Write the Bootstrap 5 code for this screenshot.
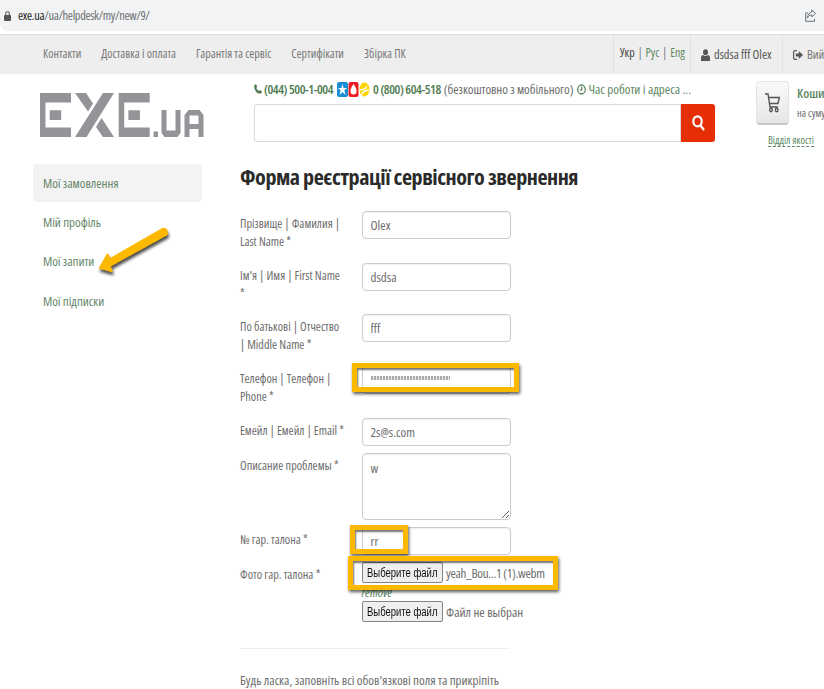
<!DOCTYPE html>
<html lang="uk">
<head>
<meta charset="utf-8">
<title>EXE.ua</title>
<link href="https://cdn.jsdelivr.net/npm/bootstrap@5.3.0/dist/css/bootstrap.min.css" rel="stylesheet">
<style>
body{font-family:"Open Sans",sans-serif;font-stretch:75%;font-size:13px;line-height:18px;color:#6c6c6c;background:#fff;width:824px;height:689px;overflow:hidden;position:relative}
a{color:#5d8862;text-decoration:none}
svg{flex:none;display:block}
.urlbar{height:31px;background:#f1f3f4;border-bottom-left-radius:8px;padding:0 8px 0 4px;font-size:12.3px;letter-spacing:-.3px;color:#6b6e71}
.urlbar b{font-weight:400;color:#222}
.urlbar .addr{margin-left:7px}
.topnav{margin-top:3px;height:40px;background:#eee;border-top:1px solid #dedede;font-size:12px;color:#777}
.topnav .links{padding-left:43px;padding-bottom:2px;gap:20px;width:613px;flex:none}
.topnav .cell{border-left:1px solid #e2e2e2;height:39px;white-space:nowrap;flex:none}
.lang{width:77px;padding-left:6px;padding-bottom:4px;gap:3px}
.lang .cur{color:#444}
.who{width:92px;padding-left:10px;gap:4px;font-size:12.4px;color:#555}
.exit{padding-left:10px;gap:4px;font-size:12.4px}
.main-area{height:615px}
.side{width:240px}
.content{width:475px}
.logo{margin:19px 0 0 40px}
.menu{margin:26px 0 0 33px;width:169px}
.menu a{display:flex;align-items:center;height:39.5px;padding-left:10px;color:#67876b;letter-spacing:-.05px}
.menu a.on{background:#f3f3f3;border-radius:4px;height:38px}
.info{height:30px;padding-left:14px;font-size:13px;white-space:nowrap}
.info strong{font-weight:600;color:#4f7a50;letter-spacing:-.45px}
.info .free{margin-left:3px;letter-spacing:-.08px}
.info .tel{margin-left:2px}
.info .free-tel{margin-left:3px}
.search{margin-left:14px;width:461px;height:38px}
.search .form-control{border:1px solid #d9d9d9;border-radius:3px 0 0 3px;height:38px}
.search .btn{width:34px;height:38px;background:#e62e04;border:0;border-radius:0 3px 3px 0;flex:none}
.cart{padding-left:41px;padding-top:7px;overflow:hidden}
.cartbtn{width:33px;height:44px;border:1px solid #e4e4e4;border-bottom:2px solid #c6c6c6;border-radius:4px;background:linear-gradient(#fafafa,#e6e6e6)}
.carttext{margin-left:8px;padding-top:3px}
.carttext span{font-size:10.5px;padding-top:2px}
.quality{font-size:10.3px;line-height:12px;border-bottom:1px dashed #5d8862;margin:9px 0 0 12px;display:inline-block}
h1{font-size:22.1px;font-weight:700;line-height:30px;letter-spacing:-.47px;color:#2b2b2b;margin:19px 0 20px;white-space:nowrap}
.frow{width:290px}
.frow label{width:107px;margin-right:14.500px;padding-top:4px;font-size:12.2px;flex:none}
.frow .form-control{width:149px;height:28px;border:1px solid #ccc;border-radius:4px;padding:2px 8px;font-size:13px;line-height:18px;color:#6c6c6c;box-shadow:inset 0 1px 1px rgba(0,0,0,.06);font-stretch:75%;flex:none}
.frow textarea.form-control{height:67px;padding-top:5px}
.h52{height:51.7px}.h35{height:35.2px}.h74{height:74px}
.file{height:21px;gap:3px;white-space:nowrap}
.file .fname{letter-spacing:-.3px}
.pick{width:81px;height:21px;background:#efefef;border:1px solid #858585;border-radius:2px;color:#111;font:13px/19px "Liberation Sans",sans-serif;padding:0;margin-left:.5px}
.pick span{display:inline-block;transform:scaleX(.73);margin:0 -20px}
.rule{width:270px;border-top:1px solid #eee;margin-top:26px}
.closing{margin-top:22px}
.stars{width:79px;height:4px;background:repeating-linear-gradient(90deg,#aaa 0 2px,#eee 2px 3px);left:371px;top:376px}
.note{border:5px solid #fdb900;box-shadow:1px 2px 3px rgba(0,0,0,.65),inset 1px 2px 2px rgba(0,0,0,.55)}
.n1{left:352px;top:363px;width:167px;height:29px}
.n2{left:350px;top:525px;width:58px;height:29px}
.n3{left:348px;top:556px;width:210px;height:34px}
.arrow{left:94px;top:222px}
</style>
<script src="https://cdn.jsdelivr.net/npm/bootstrap@5.3.0/dist/js/bootstrap.bundle.min.js"></script>
</head>
<body>
<div class="urlbar d-flex align-items-center">
  <svg width="7" height="10" viewBox="0 0 7 10"><rect y="4" width="7" height="6" rx="1" fill="#555"/><path d="M1.7 4.5V2.6a1.8 1.8 0 013.6 0v1.9" fill="none" stroke="#555" stroke-width="1.1"/></svg>
  <span class="addr"><b>exe.ua</b>/ua/helpdesk/my/new/9/</span>
  <svg class="ms-auto" width="11" height="13" viewBox="0 0 11 13" fill="none" stroke="#6b6e71" stroke-width="1"><path d="M3 4H.7v8.3h8.8V10M6.8 1l3.7 3.4-3.7 3.4V5.9C4.8 5.8 3.3 6.8 2.5 9 2.7 5.5 4.3 3.3 6.800 2.900z"/></svg>
</div>
<nav class="topnav d-flex align-items-center">
  <div class="links d-flex"><span>Контакти</span><span>Доставка і оплата</span><span>Гарантія та сервіс</span><span>Сертифікати</span><span>Збірка ПК</span></div>
  <div class="cell lang d-flex align-items-center"><span class="cur">Укр</span>|<a href="#">Рус</a>|<a href="#">Eng</a></div>
  <div class="cell who d-flex align-items-center"><svg width="9" height="12" viewBox="0 0 9 12" fill="#555"><ellipse cx="4.5" cy="3.2" rx="2.5" ry="3"/><path d="M0 12V9c0-2 1-3 2-3 1.500 1.300 3.500 1.300 5 0 1 0 2 1 2 3v3z"/></svg>dsdsa fff Olex</div>
  <div class="cell exit d-flex align-items-center"><svg width="10" height="10" viewBox="0 0 10 10"><path d="M4 .7H2C1 .7.6 1.2.6 2v6c0 .8.4 1.3 1.400 1.300h2" fill="none" stroke="#555" stroke-width="1.2"/><path d="M2.800 3.500h3V1L10 5 5.800 9V6.500h-3z" fill="#555"/></svg>Вий</div>
</nav>
<div class="main-area d-flex">
  <aside class="side flex-shrink-0">
    <svg class="logo" width="164" height="45" viewBox="0 0 164 45" fill="#929497">
      <path d="M0 0h31v9.500H5.500v25H31V44H0zM9.700 17.300h11.500v9.800H9.700z"/>
      <path d="M63 0h11L46.500 44H35zM35 0h11l7 10.500-5 8zM61.500 25L74 44H63l-7-10z"/>
      <path transform="translate(78.700)" d="M0 0h31v9.500H5.500v25H31V44H0zM9.700 17.300h11.500v9.800H9.700z"/>
      <path d="M113.500 38.500h4.500V44h-4.500zM121.500 17h5v20.500h9V17h5V40l-3 4h-13l-3-4zM144.500 44V22l4-5h11l4 5v22h-5v-8h-9v8zM149.500 31h9v-8.500h-9z"/>
    </svg>
    <div class="menu"><a class="on" href="#">Мої замовлення</a><a href="#">Мій профіль</a><a href="#">Мої запити</a><a href="#">Мої підписки</a></div>
  </aside>
  <main class="content flex-shrink-0">
    <div class="info d-flex align-items-center">
      <svg width="8" height="10" viewBox="0 0 8 10"><path d="M.4.9L2 .3l1.200 2.500L2.300 4c.5 1.300 1.400 2.300 2.600 3l1-1L8 7.500 7.300 9.300C3.800 10.900-.6 6 .4.900z" fill="#4f7a50"/></svg>
      <strong class="tel">(044) 500-1-004</strong>
      <svg class="ms-1" width="33" height="15" viewBox="0 0 33 15"><rect width="11" height="15" rx="2" fill="#1b8fd6"/><path d="M5.500 2l1 4H10L7.300 8.200 8.500 13 5.500 10l-3 3 1.200-4.800L1 6h3.500z" fill="#fff"/><rect x="11.500" width="10" height="15" rx="2" fill="#ed1c24"/><path d="M16.500 2c2 3 3 4.500 3 7a3 3.500 0 01-6 0c0-2.500 1-4 3-7z" fill="#fff"/><ellipse cx="27.500" cy="7.500" rx="5" ry="7" fill="#ffd500"/><path d="M22.500 8c3 0 7.500-1.500 7-4M25 13c0-3 2-4.500 7-5" fill="none" stroke="#fff" stroke-width="1.300"/></svg>
      <strong class="free-tel">0 (800) 604-518</strong><span class="free">(безкоштовно з мобільного)</span>
      <svg class="ms-1" width="9" height="11" viewBox="0 0 9 11" fill="none" stroke="#5d8862" stroke-width="1.300"><ellipse cx="4.500" cy="5.500" rx="3.800" ry="4.500"/><path d="M4.700 2.800v3H2.800"/></svg>
      <a href="#" class="tel">Час роботи і адреса ...</a>
    </div>
    <div class="search d-flex"><input class="form-control" aria-label="Пошук"><button class="btn p-0 d-flex align-items-center justify-content-center" aria-label="Знайти"><svg width="13" height="16" viewBox="0 0 13 16" fill="none" stroke="#fff" stroke-width="2.200"><ellipse cx="5.500" cy="6.300" rx="4.200" ry="5"/><path d="M8.300 10.300L12 15"/></svg></button></div>
    <h1>Форма реєстрації сервісного звернення</h1>
    <form>
      <div class="frow h52 d-flex align-items-start"><label>Прізвище | Фамилия |<br>Last Name *</label><input class="form-control" value="Olex"></div>
      <div class="frow h52 d-flex align-items-start"><label>Ім'я | Имя | First Name<br>*</label><input class="form-control" value="dsdsa"></div>
      <div class="frow h52 d-flex align-items-start"><label>По батькові | Отчество<br>| Middle Name *</label><input class="form-control" value="fff"></div>
      <div class="frow h52 d-flex align-items-start"><label>Телефон | Телефон |<br>Phone *</label><input class="form-control" aria-label="Телефон"></div>
      <div class="frow h35 d-flex align-items-start"><label>Емейл | Емейл | Email *</label><input class="form-control" value="2s@s.com"></div>
      <div class="frow h74 d-flex align-items-start"><label>Описание проблемы *</label><textarea class="form-control">w</textarea></div>
      <div class="frow h35 d-flex align-items-start"><label>№ гар. талона *</label><input class="form-control" value="rr"></div>
      <div class="frow d-flex align-items-start"><label>Фото гар. талона *</label>
        <div><div class="file d-flex align-items-center"><button type="button" class="pick"><span>Выберите файл</span></button><span class="fname">yeah_Bou...1 (1).webm</span></div>
        <a href="#" class="d-block fst-italic">remove</a>
        <div class="file d-flex align-items-center"><button type="button" class="pick"><span>Выберите файл</span></button><span>Файл не выбран</span></div></div>
      </div>
      <div class="rule"></div>
      <p class="closing mb-0 text-nowrap">Будь ласка, заповніть всі обов'язкові поля та прикріпіть</p>
    </form>
  </main>
  <div class="cart flex-grow-1">
    <div class="d-flex text-nowrap"><div class="cartbtn flex-shrink-0 d-flex align-items-center justify-content-center"><svg width="15" height="20" viewBox="0 0 15 20" fill="none" stroke="#555" stroke-width="1.400"><path d="M0 1h3l2 13h8M3.600 4.500h10.700L13 10.500H4.500"/><ellipse cx="6" cy="17" rx="1.300" ry="1.700"/><ellipse cx="11.700" cy="17" rx="1.300" ry="1.700"/></svg></div>
    <div class="carttext"><a href="#" class="fw-semibold d-block">Коши</a><span class="d-block">на суму</span></div></div>
    <a href="#" class="quality text-nowrap">Відділ якості</a>
  </div>
</div>
<div class="stars position-absolute"></div>
<div class="note n1 position-absolute"></div>
<div class="note n2 position-absolute"></div>
<div class="note n3 position-absolute"></div>
<svg class="arrow position-absolute" width="80" height="56" viewBox="0 0 80 56"><g stroke-linejoin="round" style="filter:drop-shadow(1px 3px 1.5px rgba(0,0,0,.7))"><path d="M5.500 46L13.500 32 16 37 69 6.500Q73.500 6 73 12.500L16 44 18 49.500z" fill="#fdb900" stroke="#fdb900" stroke-width="1.5"/></g></svg>
</body>
</html>
